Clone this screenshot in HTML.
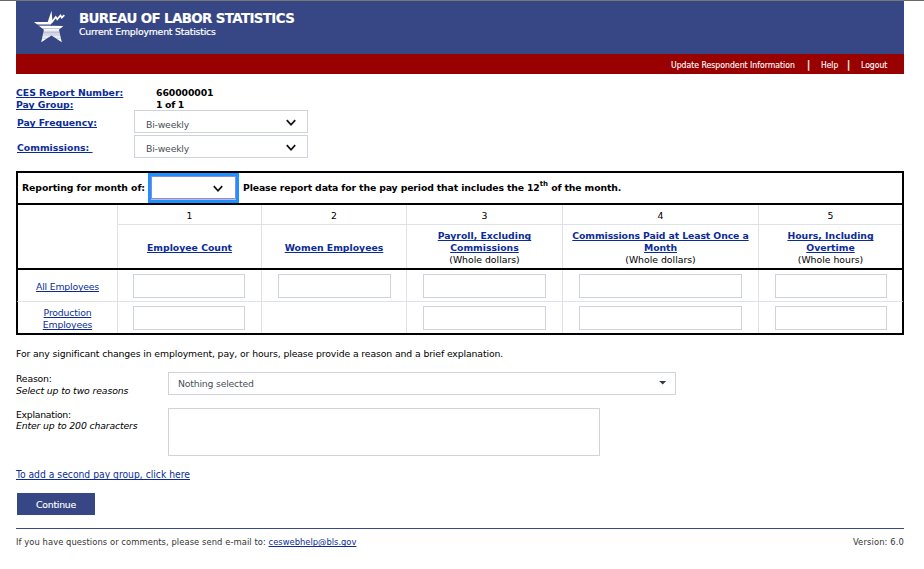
<!DOCTYPE html>
<html lang="en">
<head>
<meta charset="utf-8">
<title>Current Employment Statistics</title>
<style>
*{box-sizing:border-box;margin:0;padding:0}
html,body{width:924px;height:569px;background:#fff;overflow:hidden}
body{position:relative;font-family:"DejaVu Sans Condensed","Liberation Sans",sans-serif;font-size:10px;color:#000}
.abs{position:absolute;white-space:nowrap;line-height:12px}
.sx{transform-origin:0 50%}
a{color:#0b2c96;text-decoration:underline;text-decoration-skip-ink:none}
.b{font-weight:bold;font-family:"DejaVu Sans","Liberation Sans",sans-serif;font-size:9.3px}
.v{font-family:"DejaVu Sans","Liberation Sans",sans-serif;font-size:9.3px}
.topline{left:0;top:0;width:924px;height:1px;background:#6a6a6a}
.topline2{left:16px;top:0;width:888px;height:1px;background:#787876}
.blue{left:16px;top:1px;width:888px;height:53px;background:#374785}
.red{left:16px;top:54px;width:888px;height:20px;background:#990000}
.white{color:#fff;-webkit-text-stroke:.12px #fff}
.g{color:#495057}
.sel{border:1px solid #ced4da;background:#fff}
.inp{border:1px solid #ced4da;background:#fff;height:24px}
.vl{width:1px;background:#dee2e6;top:205px;height:128px}
.hl{height:1px;background:#dee2e6}
.thick{background:#000;z-index:2}
.c{text-align:center}
</style>
</head>
<body>
<div class="abs topline"></div>
<div class="abs topline2"></div>
<div class="abs blue"></div>
<div class="abs red"></div>

<!-- logo -->
<svg class="abs" style="left:28px;top:6px" width="44" height="42" viewBox="0 0 44 42">
  <path d="M6 16 L19.7 16 L23.5 4.8 L24.5 15.6 L22.4 19.8 L35.3 19.9 L31 23.7 L33.8 36.3 L23.5 29.6 L13.2 36.3 L15.9 23.7 Z" fill="#fff"/>
  <path d="M23.6 16.6 L27.7 10.9 L29.2 13.3 L32.5 9.5 L33.8 11.7 L36.3 9.1" fill="none" stroke="#fff" stroke-width="1.7" stroke-linejoin="miter"/>
  <g stroke="#374785" fill="none">
    <path d="M8 19.1 H24" stroke-width="1.2"/>
    <path d="M12 22.6 H34" stroke-width=".5" opacity=".7"/>
    <path d="M12 25.2 H34 M12 26.5 H34 M12 27.8 H34 M12 29.1 H34" stroke-width=".6" opacity=".55"/>
    <path d="M12 31 H34 M12 32.6 H34" stroke-width=".5" opacity=".45"/>
  </g>
</svg>

<div class="abs white sx" id="title" style="left:79px;top:11px;font-family:'DejaVu Sans','Liberation Sans',sans-serif;font-size:13.4px;line-height:15px;font-weight:bold;letter-spacing:-.62px">BUREAU OF LABOR STATISTICS</div>
<div class="abs white v" id="sub" style="left:79px;top:25px;line-height:13px;letter-spacing:-.195px;-webkit-text-stroke:.2px #fff">Current Employment Statistics</div>

<div class="abs white sx" id="nav1" style="left:670.5px;top:59px;font-size:9.3px;transform:scaleX(.927)">Update Respondent Information</div>
<div class="abs white" id="bar1" style="left:807px;top:58.5px;font-weight:bold;font-size:9.7px">|</div>
<div class="abs white sx" id="nav2" style="left:821px;top:59px;font-size:9.3px;transform:scaleX(.905)">Help</div>
<div class="abs white" id="bar2" style="left:847px;top:58.5px;font-weight:bold;font-size:9.7px">|</div>
<div class="abs white sx" id="nav3" style="left:861px;top:59px;font-size:9.3px;transform:scaleX(.92)">Logout</div>

<!-- info -->
<a class="abs b" id="l1" style="left:16px;top:87px">CES Report Number:</a>
<div class="abs b" id="v1" style="left:156px;top:87px;letter-spacing:-.09px">660000001</div>
<a class="abs b" id="l2" style="left:16px;top:99px">Pay Group:</a>
<div class="abs b" id="v2" style="left:156px;top:99px;letter-spacing:-.3px">1 of 1</div>
<a class="abs b" id="l3" style="left:17px;top:117px">Pay Frequency:</a>
<a class="abs b" id="l4" style="left:17px;top:142px;white-space:pre">Commissions: </a>

<div class="abs sel" style="left:134px;top:110px;width:174px;height:23px"></div>
<div class="abs g v" id="s1" style="left:146px;top:119px;letter-spacing:-.2px">Bi-weekly</div>
<svg class="abs" style="left:284.5px;top:119px" width="12" height="8" viewBox="0 0 12 8"><path d="M1.8 1.1 L6 5.8 L10.2 1.1" fill="none" stroke="#111" stroke-width="1.7"/></svg>
<div class="abs sel" style="left:134px;top:135px;width:174px;height:23px"></div>
<div class="abs g v" id="s2" style="left:146px;top:143px;letter-spacing:-.2px">Bi-weekly</div>
<svg class="abs" style="left:284.5px;top:144px" width="12" height="8" viewBox="0 0 12 8"><path d="M1.8 1.1 L6 5.8 L10.2 1.1" fill="none" stroke="#111" stroke-width="1.7"/></svg>

<!-- table frame -->
<div class="abs" style="left:16px;top:171px;width:888px;height:164px;border:2px solid #000"></div>
<div class="abs thick" style="left:16px;top:203px;width:888px;height:2px"></div>
<div class="abs thick" style="left:16px;top:268px;width:888px;height:2px"></div>
<div class="abs vl" style="left:117px"></div>
<div class="abs vl" style="left:261px"></div>
<div class="abs vl" style="left:406px"></div>
<div class="abs vl" style="left:562px"></div>
<div class="abs vl" style="left:758px"></div>
<div class="abs hl" style="left:117px;top:224px;width:785px"></div>
<div class="abs hl" style="left:18px;top:301px;width:884px"></div>
<div class="abs" style="left:17px;top:301px;width:1px;height:1px;background:#8a8c8f"></div>
<div class="abs" style="left:902px;top:301px;width:1px;height:1px;background:#8a8c8f"></div>

<div class="abs b" id="rep" style="left:22px;top:182px;letter-spacing:-.07px">Reporting for month of:</div>
<div class="abs" style="left:148px;top:173px;width:91px;height:30px;border:3px solid #1e90ff;background:#fff"></div>
<div class="abs" style="left:151px;top:176px;width:85px;height:23px;border:1px solid #8c8cd4;background:#fff"></div>
<div class="abs" style="left:151px;top:199px;width:85px;height:1px;background:#b9b9e6"></div>
<svg class="abs" style="left:212px;top:185px" width="12" height="8" viewBox="0 0 12 8"><path d="M1.8 1.1 L6 5.8 L10.2 1.1" fill="none" stroke="#111" stroke-width="1.7"/></svg>
<div class="abs b" id="pls" style="left:243px;top:182px;letter-spacing:-.125px">Please report data for the pay period that includes the 12<sup style="font-size:7px;line-height:0;vertical-align:5px;letter-spacing:0">th</sup> of the month.</div>

<!-- column numbers -->
<div class="abs c v" style="left:118px;width:143px;top:210px">1</div>
<div class="abs c v" style="left:262px;width:144px;top:210px">2</div>
<div class="abs c v" style="left:407px;width:155px;top:210px">3</div>
<div class="abs c v" style="left:563px;width:195px;top:210px">4</div>
<div class="abs c v" style="left:759px;width:143px;top:210px">5</div>

<div class="abs c v" style="left:118px;width:143px;top:242px"><a class="b" id="h1">Employee Count</a></div>
<div class="abs c v" style="left:262px;width:144px;top:242px"><a class="b" id="h2">Women Employees</a></div>
<div class="abs c v" style="left:407px;width:155px;top:230px;white-space:normal"><a class="b" id="h3">Payroll, Excluding<br>Commissions</a><br>(Whole dollars)</div>
<div class="abs c v" style="left:563px;width:195px;top:230px;white-space:normal"><a class="b" id="h4" style="letter-spacing:-.09px">Commissions Paid at Least Once a<br>Month</a><br>(Whole dollars)</div>
<div class="abs c v" style="left:759px;width:143px;top:230px;white-space:normal"><a class="b" id="h5">Hours, Including<br>Overtime</a><br>(Whole hours)</div>

<div class="abs c v" style="left:18px;width:99px;top:281px;letter-spacing:-.18px"><a id="r1">All Employees</a></div>
<div class="abs c v" style="left:18px;width:99px;top:307px;white-space:normal;line-height:11.5px;letter-spacing:-.17px"><a id="r2">Production<br>Employees</a></div>

<div class="abs inp" style="left:133px;top:274px;width:112px"></div>
<div class="abs inp" style="left:278px;top:274px;width:113px"></div>
<div class="abs inp" style="left:423px;top:274px;width:123px"></div>
<div class="abs inp" style="left:579px;top:274px;width:163px"></div>
<div class="abs inp" style="left:775px;top:274px;width:112px"></div>
<div class="abs inp" style="left:133px;top:306px;width:112px"></div>
<div class="abs inp" style="left:423px;top:306px;width:123px"></div>
<div class="abs inp" style="left:579px;top:306px;width:163px"></div>
<div class="abs inp" style="left:775px;top:306px;width:112px"></div>

<!-- below -->
<div class="abs v" id="p1" style="left:16px;top:348px;letter-spacing:-0.116px">For any significant changes in employment, pay, or hours, please provide a reason and a brief explanation.</div>
<div class="abs v" id="p2" style="left:16px;top:373px;letter-spacing:-0.19px">Reason:</div>
<div class="abs v" id="p3" style="left:16px;top:385px;font-style:italic;letter-spacing:-0.12px">Select up to two reasons</div>
<div class="abs sel" style="left:168px;top:372px;width:508px;height:23px"></div>
<div class="abs g v" id="p4" style="left:178px;top:378px;letter-spacing:-0.19px">Nothing selected</div>
<svg class="abs" style="left:659px;top:381px" width="8" height="4" viewBox="0 0 8 4"><path d="M0.2 0 L7.2 0 L3.7 3.5 Z" fill="#343a40"/></svg>
<div class="abs v" id="p5" style="left:16px;top:409px;letter-spacing:-0.27px">Explanation:</div>
<div class="abs v" id="p6" style="left:16px;top:420px;font-style:italic;letter-spacing:-0.135px">Enter up to 200 characters</div>
<div class="abs sel" style="left:168px;top:408px;width:432px;height:48px"></div>
<a class="abs" id="p7" style="left:16px;top:468px;font-size:10.25px">To add a second pay group, click here</a>
<div class="abs" style="left:17px;top:493px;width:78px;height:22px;background:#374785"></div>
<div class="abs white c v" id="btn" style="left:17px;width:78px;top:499px;letter-spacing:-.22px">Continue</div>
<div class="abs" style="left:16px;top:528px;width:888px;height:1px;background:#374785"></div>
<div class="abs" id="f1" style="color:#333;left:16px;top:536px;font-size:9.3px;letter-spacing:.07px">If you have questions or comments, please send e-mail to: <a id="f2" style="letter-spacing:0">ceswebhelp@bls.gov</a></div>
<div class="abs" id="f3" style="color:#333;right:20px;top:536px;font-size:9.3px;letter-spacing:.13px">Version: 6.0</div>
</body>
</html>
